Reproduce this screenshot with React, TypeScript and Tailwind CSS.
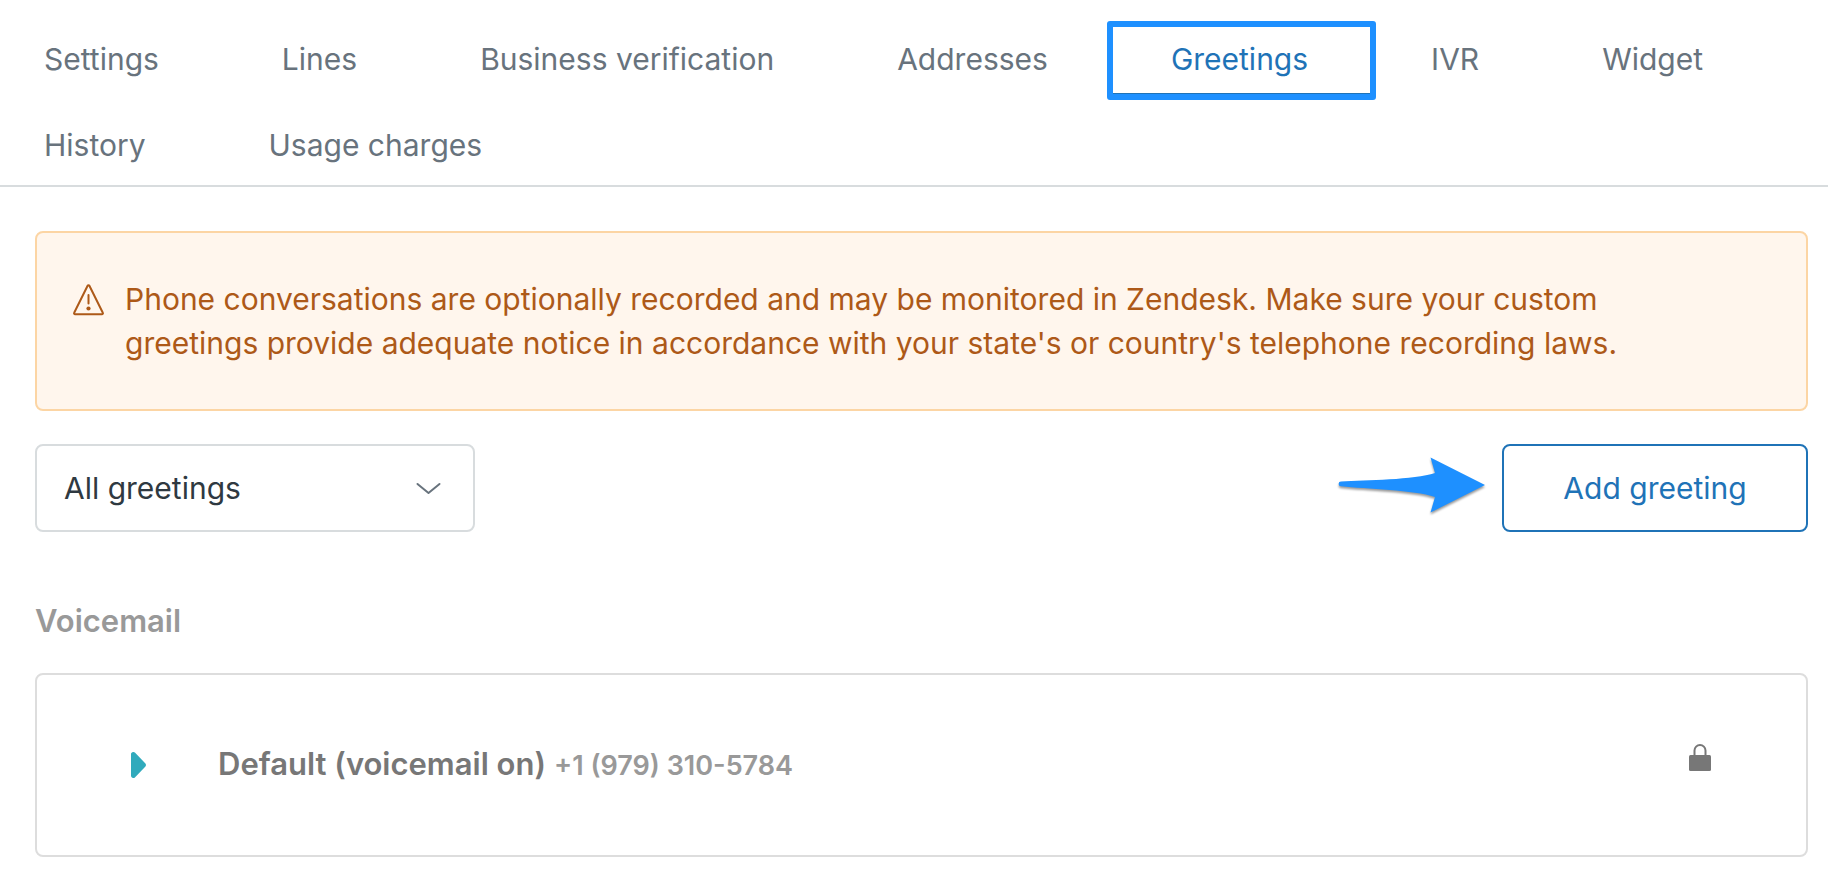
const tabs = [
  "Settings",
  "Lines",
  "Business verification",
  "Addresses",
  "Greetings",
  "IVR",
  "Widget",
  "History",
  "Usage charges",
];

function Tabs() {
  return (
    <nav aria-label="Voice settings" className="flex flex-wrap gap-x-[123px] border-b-2 border-[#d8dcde] pt-[13px] pl-11">
      {tabs.map((tab) => {
        const active = tab === "Greetings";
        return (
          <a
            key={tab}
            href="#"
            aria-current={active ? "page" : undefined}
            className={
              active
                ? "relative h-[86px] pt-6 text-[#1f73b7]"
                : "h-[86px] pt-6 text-[#68737d]"
            }
          >
            {tab}
            {active && (
              <span className="pointer-events-none absolute top-2 -right-[68px] -left-16 h-[79px] rounded-[3px] border-6 border-[#1e90ff] shadow-[inset_0_-1px_0_#1f73b7]" />
            )}
          </a>
        );
      })}
    </nav>
  );
}

function Notice() {
  return (
    <div role="alert" className="flex gap-5 rounded-lg border-2 border-[#fcd5a4] bg-[#fff6ed] py-11 pr-40 pl-9 text-[#ad5918]">
      <svg viewBox="0 0 32 32" fill="none" className="mt-[7px] h-8 w-8 shrink-0" aria-hidden="true">
        <path d="M14.600 1.700 1.200 28.700a1 1 0 0 0 .9 1.500h26.800a1 1 0 0 0 .9-1.500L16.400 1.700a1 1 0 0 0-1.800 0Z" stroke="currentColor" strokeWidth="2" />
        <path d="M15.500 11v8.500" stroke="currentColor" strokeWidth="2" strokeLinecap="round" />
        <circle cx="15.5" cy="24.500" r="2.1" fill="currentColor" />
      </svg>
      <p>
        Phone conversations are optionally recorded and may be monitored in Zendesk. Make sure your custom greetings
        provide adequate notice in accordance with your state's or country's telephone recording laws.
      </p>
    </div>
  );
}

function Toolbar() {
  return (
    <div className="mt-[33px] flex items-center">
      <div className="relative w-[440px]">
        <select
          aria-label="Filter greetings"
          className="h-[88px] w-full appearance-none rounded-lg border-2 border-[#d8dcde] bg-white pr-20 pl-[27px] text-[#2f3941]"
        >
          <option>All greetings</option>
        </select>
        <svg viewBox="0 0 26 14" fill="none" className="pointer-events-none absolute top-[38px] right-[33px] h-[14px] w-[26px]" aria-hidden="true">
          <path d="m1.500 2 11 9 11-9" stroke="#68737d" strokeWidth="2" strokeLinecap="round" strokeLinejoin="round" />
        </svg>
      </div>
      <svg viewBox="0 0 150 64" className="mr-4 mb-2 ml-auto h-16 w-[150px] overflow-visible drop-shadow-[0_2px_1px_rgba(0,0,0,0.4)]" aria-hidden="true">
        <path d="M5 29.500C30 28 78 28 99 21L94.500 5.500 149 33 94.500 60.500 99 45C78 38 30 37 5 34.300a2.400 2.400 0 0 1 0-4.800Z" fill="#1e90ff" />
      </svg>
      <button type="button" className="h-[88px] w-[306px] rounded-lg border-2 border-[#1f73b7] bg-white text-[#1f73b7]">
        Add greeting
      </button>
    </div>
  );
}

function Voicemail() {
  return (
    <section>
      <h2 className="mt-[67px] text-[31px] leading-[44px] font-semibold text-[#999999]">Voicemail</h2>
      <div className="mt-[30px] flex h-[184px] items-center rounded-lg border-2 border-[#dddddd] px-[94px]">
        <button type="button" aria-label="Expand greeting" className="mr-[71px] h-[26px] w-4">
          <svg viewBox="0 0 16 26" className="h-[26px] w-4" aria-hidden="true">
            <path d="M0 2.200v21.600c0 2 2.400 2.900 3.900 1.600l10.300-10.600c1-1 1-2.600 0-3.600L3.900.6C2.400-.7 0 .2 0 2.200Z" fill="#30aabc" />
          </svg>
        </button>
        <p className="flex items-baseline gap-2 text-[31px] leading-[44px] font-semibold text-[#777777]">
          Default (voicemail on)
          <span className="text-[27px] font-semibold text-[#999999]">+1 (979) 310-5784</span>
        </p>
        <svg viewBox="0 0 24 28" fill="none" className="mb-4 ml-auto h-7 w-6" aria-hidden="true">
          <path d="M6.500 13V7.500a5.500 5.500 0 0 1 11 0V13" stroke="#777777" strokeWidth="2" />
          <rect x="1" y="12" width="22" height="16" rx="1.500" fill="#777777" />
        </svg>
      </div>
    </section>
  );
}

export default function App() {
  return (
    <div className="min-h-screen bg-white font-['Inter',sans-serif] text-[30px] leading-[44px]">
      <Tabs />
      <main className="pt-11 pr-5 pb-10 pl-[35px]">
        <Notice />
        <Toolbar />
        <Voicemail />
      </main>
    </div>
  );
}
